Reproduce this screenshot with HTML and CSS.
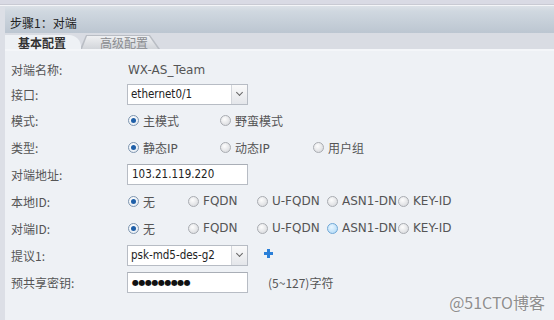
FILE: index.html
```html
<!DOCTYPE html>
<html lang="zh-CN">
<head>
    <meta charset="UTF-8">
    <title>IKE VPN - 对端</title>
    <link rel="stylesheet" href="styles.css">
</head>
<body>
    <div class="topbar"></div>

    <div class="panel">
        <!-- Step header -->
        <div class="step-title">步骤1：对端</div>

        <!-- Tabs -->
        <div class="tabs">
            <div class="tab active">基本配置</div>
            <div class="tab-wrap"><div class="tab">高级配置</div></div>
        </div>

        <!-- Form -->
        <div class="form">
            <div class="row short">
                <span class="label">对端名称:</span>
                <span class="value">WX-AS_Team</span>
            </div>
            <div class="row short">
                <span class="label">接口:</span>
                <div class="select"><span class="select-text">ethernet0/1</span><span class="select-btn"></span></div>
            </div>
            <div class="row">
                <span class="label">模式:</span>
                <div class="options opts-mode">
                    <label class="opt"><span class="radio on"></span>主模式</label>
                    <label class="opt"><span class="radio"></span>野蛮模式</label>
                </div>
            </div>
            <div class="row tall">
                <span class="label">类型:</span>
                <div class="options opts-mode">
                    <label class="opt"><span class="radio on"></span>静态IP</label>
                    <label class="opt"><span class="radio"></span>动态IP</label>
                    <label class="opt"><span class="radio"></span>用户组</label>
                </div>
            </div>
            <div class="row mid">
                <span class="label">对端地址:</span>
                <div class="input">103.21.119.220</div>
            </div>
            <div class="row">
                <span class="label">本地ID:</span>
                <div class="options opts-id">
                    <label class="opt"><span class="radio on"></span>无</label>
                    <label class="opt"><span class="radio"></span>FQDN</label>
                    <label class="opt"><span class="radio"></span>U-FQDN</label>
                    <label class="opt"><span class="radio"></span>ASN1-DN</label>
                    <label class="opt"><span class="radio"></span>KEY-ID</label>
                </div>
            </div>
            <div class="row tall">
                <span class="label">对端ID:</span>
                <div class="options opts-id">
                    <label class="opt"><span class="radio on"></span>无</label>
                    <label class="opt"><span class="radio"></span>FQDN</label>
                    <label class="opt"><span class="radio"></span>U-FQDN</label>
                    <label class="opt"><span class="radio hover"></span>ASN1-DN</label>
                    <label class="opt"><span class="radio"></span>KEY-ID</label>
                </div>
            </div>
            <div class="row mid">
                <span class="label">提议1:</span>
                <div class="select"><span class="select-text">psk-md5-des-g2</span><span class="select-btn"></span></div>
                <svg class="plus" width="9" height="9" viewBox="0 0 9 9">
                    <path d="M3 0h3v3h3v3H6v3H3V6H0V3h3z" fill="#2a7fd8"/>
                </svg>
            </div>
            <div class="row mid">
                <span class="label">预共享密钥:</span>
                <div class="input password">●●●●●●●●●</div>
                <span class="hint">(5~127)字符</span>
            </div>
        </div>

        <div class="watermark">@51CTO博客</div>
    </div>
</body>
</html>
```

FILE: styles.css
```css
/* General Reset */
* {
    margin: 0;
    padding: 0;
    box-sizing: border-box;
}

body {
    width: 554px;
    height: 320px;
    overflow: hidden;
    background: #eef1f5;
    font-family: "DejaVu Sans", "Noto Sans CJK SC", sans-serif;
    font-size: 12px;
    color: #333;
}

/* Top strip */
.topbar {
    height: 6px;
    background: #d9dae4;
    border-bottom: 1px solid #f4f5f8;
    box-shadow: inset 0 -1px 0 #c9cad3;
}

.panel {
    position: relative;
    height: 314px;
    border-left: 5px solid #dcdfe6;
}

/* Step header */
.step-title {
    height: 27px;
    padding: 9px 0 0 5px;
    background: linear-gradient(#dce1e7 0, #d0d8e0 5px, #bcc6d1 100%);
    font-family: "Noto Sans CJK SC", sans-serif;
    font-size: 12px;
    color: #222;
    line-height: 16px;
}

/* Tabs */
.tabs {
    display: flex;
    height: 18px;
    padding-top: 2px;
    background: #d9dce3;
    border-bottom: 2px solid #f4f6f9;
}

.tab,
.tab.active {
    font-family: "Noto Sans CJK SC", sans-serif;
    font-size: 12px;
    line-height: 16px;
}

.tab.active {
    position: relative;
    z-index: 1;
    width: 76px;
    padding-left: 13px;
    background: #eef1f5;
    border-radius: 0 12px 0 0;
    font-weight: bold;
    color: #333;
}

/* inactive tab: slanted sides, outline drawn by the wrapper */
.tab-wrap {
    width: 80px;
    margin-left: -1px;
    background: #b9bdc4;
    clip-path: polygon(6px 0, 70px 0, 80px 100%, 0 100%);
}

.tab-wrap .tab {
    height: 100%;
    padding-left: 20px;
    background: linear-gradient(#f1f2f4, #d2d5da);
    clip-path: polygon(7px 1px, 69px 1px, 78px 100%, 2px 100%);
    color: #8a8c90;
}

/* Form */
.form {
    padding: 6px 0 0 6px;
}

.row {
    display: flex;
    align-items: center;
    height: 26px;
}

.row.short {
    height: 25px;
}

.row.mid {
    height: 27px;
}

.row.tall {
    height: 28px;
}

.label {
    width: 116px;
    font-family: "Noto Sans CJK SC", sans-serif;
    color: #555;
}

.value {
    padding-left: 1px;
    color: #555;
}

/* Select box */
.select {
    display: flex;
    width: 121px;
    height: 21px;
    background: #fff;
    border: 1px solid #b7bcc4;
}

.select-text {
    flex: 1;
    padding-left: 3px;
    font-family: "DejaVu Sans Condensed", "DejaVu Sans", sans-serif;
    font-size: 11.5px;
    line-height: 19px;
    color: #222;
}

.select-btn {
    position: relative;
    width: 16px;
    background: linear-gradient(#fafafa, #e4e6ea);
    border-left: 1px solid #d3d6db;
}

.select-btn::after {
    content: "";
    position: absolute;
    left: 5px;
    top: 5px;
    width: 4px;
    height: 4px;
    border-right: 1.5px solid #666;
    border-bottom: 1.5px solid #666;
    transform: rotate(45deg);
}

/* Text inputs */
.input {
    width: 121px;
    height: 21px;
    padding-left: 4px;
    background: #fff;
    border: 1px solid #b7bcc4;
    border-top-color: #a9aeb6;
    font-family: "DejaVu Sans Condensed", "DejaVu Sans", sans-serif;
    font-size: 11.5px;
    line-height: 19px;
    color: #222;
}

.input.password {
    font-family: "DejaVu Sans", sans-serif;
    font-size: 8px;
    letter-spacing: -0.5px;
    color: #111;
}

.hint {
    margin-left: 20px;
    font-family: "Noto Sans CJK SC", sans-serif;
    font-size: 12px;
    color: #555;
}

.plus {
    margin-left: 16px;
    margin-top: -5px;
}

/* Radio groups */
.options {
    display: grid;
    align-items: center;
}

.opts-mode {
    grid-template-columns: 92px 93px auto;
}

.opts-id {
    grid-template-columns: 60px 69px 70px 71px auto;
}

.opt {
    display: flex;
    align-items: center;
    gap: 4px;
    padding-left: 1px;
    font-family: "DejaVu Sans", "Noto Sans CJK SC", sans-serif;
    color: #555;
    white-space: nowrap;
}

.radio {
    position: relative;
    width: 11px;
    height: 11px;
    border-radius: 50%;
    border: 1px solid #a9acb1;
    background: radial-gradient(circle at 40% 35%, #fdfdfd, #d2d4d8);
}

.radio.on {
    border-color: #7f96b0;
    background: radial-gradient(circle at 40% 35%, #ffffff, #dfe7f0);
}

.radio.on::after {
    content: "";
    position: absolute;
    left: 2px;
    top: 2px;
    width: 5px;
    height: 5px;
    border-radius: 50%;
    background: #1f5fa8;
}

.radio.hover {
    border-color: #6fa7d6;
    background: radial-gradient(circle at 40% 35%, #eaf6ff, #a9d6f5);
}

/* Watermark */
.watermark {
    position: absolute;
    right: 9px;
    bottom: 6px;
    font-family: "Noto Sans CJK SC", sans-serif;
    font-size: 16px;
    color: #8e8e8e;
    text-shadow: 0 0 2px #fff;
}
```
